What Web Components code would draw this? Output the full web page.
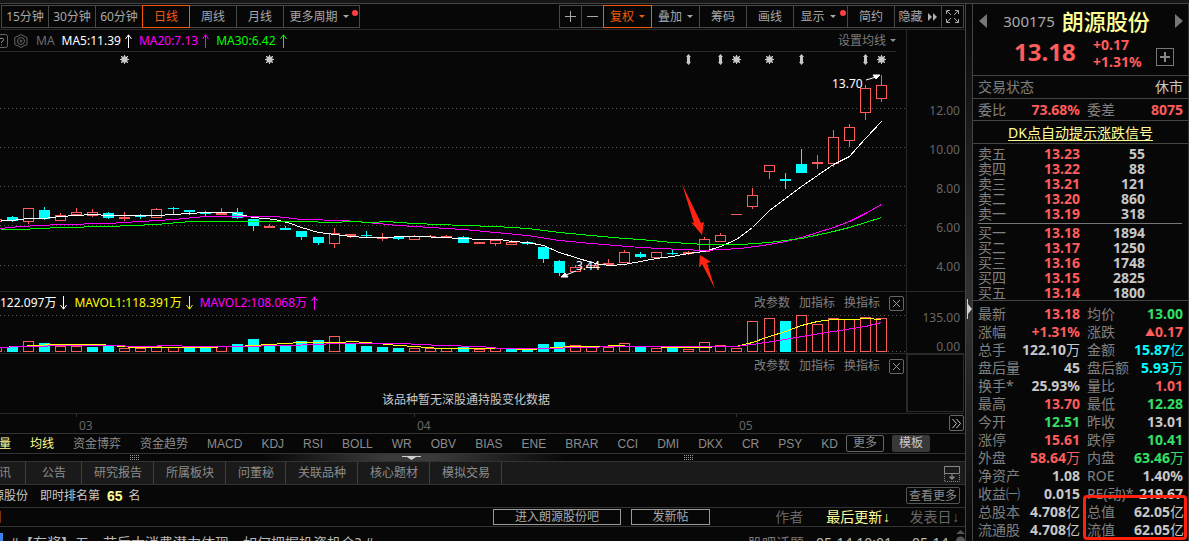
<!DOCTYPE html>
<html lang="zh-CN">
<head>
<meta charset="utf-8">
<title>朗源股份 300175</title>
<style>
:root{--line:#333;--muted:#808080;--text:#c8c8c8;--red:#ff5c5c;--green:#33e066;--cyan:#00ffff;--yellow:#ffff99;--orange:#f45a0a}
html,body{margin:0;height:100%;background:#070707}
body{font:12px/16px "Noto Sans","Noto Sans CJK SC",sans-serif;color:#a8a8a8;overflow:hidden}
</style>
</head>
<body>
<stock-app></stock-app>
<script>
const BASE = `<style>
*{box-sizing:border-box}
button{font:inherit;color:inherit;background:none;border:0;padding:0;margin:0;white-space:nowrap;cursor:pointer}
a{color:inherit;text-decoration:none}
svg{display:block;flex:none}
</style>`;
function define(name, html, setup) {
  customElements.define(name, class extends HTMLElement {
    constructor() {
      super();
      this.attachShadow({mode: 'open'});
    }
    connectedCallback() {
      this.shadowRoot.innerHTML = BASE + (typeof html === 'function' ? html(this) : html);
      if (setup) setup(this);
    }
  });
}

define('tool-button', el => `<style>
:host{display:block;position:relative;margin-left:-1px;width:48px;height:23px;flex:none}
:host([active]){color:var(--orange);z-index:1}
:host([small]){width:23px}
:host([mid]){width:49px}
:host([wide]){width:55px}
:host([period]){width:77px}
button{width:100%;height:100%;border:1px solid #484848;display:flex;align-items:center;justify-content:center;gap:5px}
:host([active]) button{border-color:var(--orange)}
.caret{border:3px solid transparent;border-top-color:currentColor;border-bottom:0}
.dot{position:absolute;right:2px;top:5px;width:6px;height:6px;border-radius:3px;background:#ff4040}
:host([period]) .caret,:host([wide]) .caret{margin-right:5px}
</style><button aria-label="${el.getAttribute('label') || el.textContent}"><slot></slot>${el.hasAttribute('menu') ? '<span class="caret"></span>' : ''}</button>${el.hasAttribute('dot') ? '<span class="dot"></span>' : ''}`);

define('chart-toolbar', `<style>
:host{display:flex;justify-content:space-between;height:27px;padding:1px 1px 0 2px;border-top:1px solid #444;border-bottom:1px solid #2a2a2a}
div{display:flex}
.right{padding-left:1px}
</style>
<div><tool-button>15分钟</tool-button><tool-button>30分钟</tool-button><tool-button>60分钟</tool-button><tool-button active>日线</tool-button><tool-button>周线</tool-button><tool-button>月线</tool-button><tool-button period menu dot>更多周期</tool-button></div>
<div class="right">
<tool-button small label="放大"><svg width="11" height="11" stroke="#a8a8a8"><path d="M0 5.5H11M5.5 0V11"/></svg></tool-button><tool-button small label="缩小"><svg width="11" height="11" stroke="#a8a8a8"><path d="M0 5.5H11"/></svg></tool-button><tool-button mid active menu>复权</tool-button><tool-button mid menu>叠加</tool-button><tool-button>筹码</tool-button><tool-button>画线</tool-button><tool-button wide menu dot>显示</tool-button><tool-button>简约</tool-button><tool-button label="隐藏">隐藏<svg style="display:inline-block" width="10" height="8" fill="#b0b0b0"><path d="M0 0L4 4L0 8ZM5 0L9 4L5 8Z"/></svg></tool-button><tool-button small label="全屏"><svg width="13" height="13" fill="none" stroke="#a8a8a8"><path d="M.5 4V.5H4M1 1L5 5M9 .5H12.5V4M12 1L8 5M.5 9V12.5H4M1 12L5 8M9 12.5H12.5V9M12 12L8 8"/></svg></tool-button>
</div>`);

define('trend-arrow', el => `<style>:host{display:inline-block;width:7px;height:14px;margin:0 7px 0 4px}:host([down]) svg{transform:rotate(180deg)}</style>
<svg width="7" height="14" fill="none" stroke="currentColor"><path d="M3.5 14V1M.5 5L3.5 .8L6.5 5"/></svg>`);

define('ma-legend', `<style>
:host{display:flex;align-items:center;height:22px;margin-right:10px;border-bottom:1px solid #2a2a2a}
span{display:flex;align-items:center}
.name{color:#6c6c6c;margin:0 7px 0 8px}
button{margin-left:auto;color:#7c7c7c;display:flex;align-items:center;gap:4px}
i{border:3px solid transparent;border-top-color:#909090;border-bottom:0}
</style>
<svg width="28" height="16" fill="none" stroke="#666"><path d="M0 1.5H5.5Q7.500 1.500 7.500 3.500V12.500Q7.500 14.500 5.500 14.500H0"/><path stroke="#999" d="M0 5.500Q3.500 4.500 3.500 6.500Q3.500 8 1.500 9V10M1.500 11.500V12.500"/><path d="M21 1.500L24 3.200L27 4.500V11.500L24 12.800L21 14.500L18 12.800L14.800 11.500V4.500L18 3.200Z"/><circle cx="21" cy="8" r="3.500"/><circle cx="21" cy="8" r="1"/></svg>
<span class="name">MA</span>
<span style="color:#fff">MA5:11.39<trend-arrow></trend-arrow></span>
<span style="color:#f0f">MA20:7.13<trend-arrow></trend-arrow></span>
<span style="color:#0f0">MA30:6.42<trend-arrow></trend-arrow></span>
<button>设置均线<i></i></button>`);

/* candle: x, high, body top, body bottom, low, falling flag — y runs down from the window top */
const CANDLES = [[-4,219,219,222,222,0],[12,216,217,221,222,1],[28,208,208,222,224,0],[44,207,210,219,220,1],[60,213,215,221,221,0],[76,208,212,215,216,0],[92,209,212,216,217,0],[108,212,213,218,219,1],[124,212,217,219,221,0],[140,214,215,217,219,1],[156,208,209,218,218,0],[173,207,208,209,215,1],[189,210,210,212,215,1],[205,211,213,214,216,1],[221,208,213,215,215,0],[237,208,212,218,219,1],[253,219,219,226,231,1],[269,224,226,228,228,0],[285,226,228,230,230,1],[301,231,231,237,240,1],[318,237,237,243,245,1],[334,228,233,244,248,0],[350,234,234,236,238,0],[366,231,235,236,237,1],[382,233,237,239,241,0],[398,237,237,239,240,1],[414,235,236,240,240,0],[430,235,236,237,237,0],[446,235,236,237,237,0],[463,236,237,243,243,1],[479,242,242,244,244,0],[495,240,240,244,246,0],[511,240,242,245,245,0],[527,241,242,244,245,1],[543,247,247,259,263,1],[559,260,261,273,276,1],[575,265,267,272,272,0],[591,265,265,268,268,0],[608,259,263,265,265,0],[624,250,252,263,263,0],[640,252,254,257,258,1],[656,252,252,258,258,0],[672,250,253,254,255,1],[688,251,252,254,255,0],[704,237,239,252,252,0],[720,233,235,242,242,0],[736,214,214,215,215,0],[752,188,195,207,209,0],[769,165,165,172,179,0],[785,173,179,181,189,1],[801,149,164,173,173,1],[817,155,162,164,169,0],[833,130,137,164,167,0],[849,124,127,141,147,0],[865,85,88,113,120,0],[881,75,85,99,102,0]];
const VOL_TOPS = '347 347 341 343 346 346 347 346 348 348 346 347 347 348 346 344 339 346 345 341 340 336 343 346 347 348 348 348 348 347 349 348 348 349 344 342 345 347 347 343 347 348 347 349 342 345 348 321 318 321 315 324 318 319 317 318'.split(' ').map(Number);
const VOL_DOWN = new Set([12,44,92,108,189,205,237,253,269,285,301,318,350,366,382,398,463,511,527,543,559,640,672,785]);
const bar = (x, top, bottom, down) => {
  const h = bottom - top;
  return down || h < 3 ? `<rect x="${x-5}" y="${top}" width="11" height="${Math.max(h,1)}" fill="${down ? '#0ff' : '#ff5c5c'}"/>`
    : `<rect x="${x-4.5}" y="${top+.5}" width="10" height="${h-1}" fill="none" stroke="#ff5c5c"/>`;
};
const poly = (color, pts) => `<polyline transform="translate(.5 .5)" fill="none" stroke="${color}" points="${pts}"/>`;
const grid = ys => ys.map(y => `<line x1="0" x2="100%" y1="${y}.5" y2="${y}.5" stroke="#555" stroke-dasharray="1 3"/>`).join('');
const star = x => `<path transform="translate(${x} 59)" fill="#c8c8c8" stroke="#c8c8c8" d="M.5 -4V5M-4 .5H5M-3 -3L4 4M4 -3L-3 4M-2 -2H3V3H-2Z"/>`;
const gem = x => `<path transform="translate(${x} 59)" fill="#c8c8c8" d="M.5 -5L3 -2H2V3H3L.5 6L-2 3H-1V-2H-2Z"/>`;

define('price-plot', () => `<style>:host{display:block;height:239px;overflow:hidden}text{font:12px "Noto Sans",sans-serif;fill:#fff}</style>
<svg width="100%" height="239"><g transform="translate(0 -52)"><g shape-rendering="crispEdges">${grid([108,147,186,225,265])}
${CANDLES.map(([x,h,t,b,l,d]) => { const c = d ? '#0ff' : '#ff5c5c';
  return `<path stroke="${c}" d="M${x+.5} ${h}V${t}M${x+.5} ${b}V${l}"/>` + bar(x,t,b,d); }).join('')}
${poly('#fff','0,220 12,220 28,218 44,218 60,216 76,215 92,214 108,215 156,215 173,214 205,212 230,212 253,217 275,219 290,223 301,227 318,232 327,233 350,236 366,237 390,237 398,236 420,236 440,237 463,238 480,239 500,239 511,241 527,242 543,245 559,252 575,257 591,262 600,264 610,265 624,264 640,261 656,258 672,256 688,253 704,251 720,246 736,239 752,227 769,210 785,198 801,186 817,175 833,164 849,156 865,138 881,121')}
${poly('#f0f','0,228 20,226 60,224 108,223 140,221 173,219 205,216 275,216 301,219 344,220 366,222 398,225 430,227 463,229 495,232 527,235 559,240 591,243 640,247 680,249 704,250 740,248 769,244 785,241 801,237 833,227 849,221 865,213 881,204')}
${poly('#0f0','0,229 20,229 60,227 108,226 156,224 190,221 301,221 334,222 350,221 372,222 385,221 414,223 463,225 495,226 527,228 559,232 591,235 624,238 640,239 672,242 704,244 740,244 769,242 801,238 833,231 849,227 865,222 881,217')}</g>
${[124,269,736,769,881].map(star).join('')}${[688,720,801,865].map(gem).join('')}
<text x="832" y="88">13.70</text><text x="576" y="270">3.44</text>
<path stroke="#fff" fill="#fff" d="M866 80L876 77M880 75L873 75L876 79Z"/>
<path stroke="#fff" fill="#fff" d="M576 271L566 275M561 277L565 273L568 277Z"/>
<path fill="#ff2314" d="M682 184L694 223L691 222L702 235L704 222L701 223ZM700 255L711 262L707 263L715 289L702 264L699 268Z"/>
</g></svg>`);

define('volume-plot', () => `<style>:host{display:block;height:39px;overflow:hidden}</style>
<svg width="100%" height="39" shape-rendering="crispEdges"><g transform="translate(0 -314)">${grid([315,351])}
${VOL_TOPS.map((t,i) => bar(CANDLES[i][0], t, 352, VOL_DOWN.has(CANDLES[i][0]))).join('')}
${poly('#ff0','0,347 36,345 52,344 100,344 133,347 198,347 237,346 253,345 301,342 342,342 350,341 366,342 398,345 414,346 440,348 500,348 530,349 543,348 570,346 600,346 615,345 633,346 688,347 736,346 752,342 769,336 785,331 801,325 817,321 833,319 855,319 865,318 881,319')}
${poly('#f0f','0,347 20,346 76,345 108,345 140,346 173,345 190,346 237,346 285,345 318,344 334,343 400,343 440,345 480,346 500,348 550,348 575,347 624,346 736,346 752,344 785,339 801,336 833,331 865,326 881,322')}
</g></svg>`);

define('panel-actions', `<style>:host{display:flex;align-items:center;gap:9px;margin-left:auto;margin-right:2px;color:#808080}
.x{border:1px solid #666;border-radius:2px;width:15px;height:15px;padding:3px}</style>
<button>改参数</button><button>加指标</button><button>换指标</button><button class="x" aria-label="关闭"><svg width="7" height="7" stroke="#999"><path d="M0 0L7 7M7 0L0 7"/></svg></button>`);

define('chart-stack', `<style>
:host{display:block}
section{display:grid;grid-template-columns:minmax(0,1fr) 58px;margin-right:1px;border-bottom:1px solid #2a2a2a}
.axis{border-left:1px solid #2a2a2a;text-align:right;padding-right:4px;color:#666}
.price .axis{padding-top:61px;line-height:39px}
.vol .axis{height:61px;line-height:29px;padding-top:11px}
.head{display:flex;align-items:center;height:22px}
.head span{display:flex;align-items:center;white-space:nowrap}
.msg{height:37px;padding:16px 0 0 26px;text-align:center;color:#c8c8c8}
.empty .axis{border:1px solid #2a2a2a;border-left-width:2px;margin-bottom:1px}
.empty .head{padding-top:2px}
.months{display:grid;grid-template-columns:76px 338px 322px minmax(0,1fr) 16px;height:19px;color:#666}
.months span{padding-left:3px;line-height:24px;background:linear-gradient(#333,#333) 0 0/1px 3px no-repeat}
.months button{border:1px solid #666;border-radius:2px;width:15px;height:16px;margin-top:1px;padding:3px 2px}
</style>
<section class="price"><div><ma-legend></ma-legend><price-plot></price-plot></div><div class="axis"><div>12.00</div><div>10.00</div><div>8.00</div><div>6.00</div><div>4.00</div></div></section>
<section class="vol"><div><div class="head"><span style="color:#fff">122.097万<trend-arrow down></trend-arrow></span><span style="color:#ff0">MAVOL1:118.391万<trend-arrow down></trend-arrow></span><span style="color:#f0f">MAVOL2:108.068万<trend-arrow></trend-arrow></span><panel-actions></panel-actions></div><volume-plot></volume-plot></div><div class="axis"><div>135.00</div><div>0.00</div></div></section>
<section class="empty"><div><div class="head"><panel-actions></panel-actions></div><div class="msg">该品种暂无深股通持股变化数据</div></div><div class="axis"></div></section>
<div class="months"><i></i><span>03</span><span>04</span><span>05</span><button aria-label="展开"><svg width="9" height="9" fill="none" stroke="#c8c8c8"><path d="M.5 0L4.500 4.500L.5 9M4.500 0L8.500 4.500L4.500 9"/></svg></button></div>`);

define('indicator-tabs', () => `<style>
:host{display:flex;align-items:center;gap:19px;height:21px;border-top:1px solid var(--line);border-bottom:1px solid var(--line);font-family:"Liberation Sans","Noto Sans CJK SC",sans-serif;color:#8c8c8c;overflow:hidden}
button{flex:none}
.on{color:var(--yellow)}
.box{border:1px solid #666;border-radius:2px;width:38px;height:17px;line-height:15px;margin-left:-11px}
.fill{background:#383838;border-color:#383838;color:#c8c8c8}
.first{margin-left:-1px}
</style><button class="on first">量</button><button class="on">均线</button>${'资金博弈 资金趋势 MACD KDJ RSI BOLL WR OBV BIAS ENE BRAR CCI DMI DKX CR PSY KD'.split(' ').map(t => `<button>${t}</button>`).join('')}<button class="box">更多</button><button class="box fill">模板</button>`);

define('pane-splitter', `<style>
:host{display:flex;height:7px;align-items:center;background:linear-gradient(90deg,transparent 27%,#3a3a3a 40%,#3a3a3a 45%,transparent 59%)}
.d{width:9px;height:6px;background:repeating-linear-gradient(90deg,#999 0 1px,transparent 1px 2px);mask:repeating-linear-gradient(#000 0 1px,transparent 1px 2px)}
.a{flex:0 0 130px}.b{flex:0 0 263px}.c{flex:0 0 263px}
</style><i class="a"></i><i class="d"></i><i class="b"></i><svg width="19" height="5" fill="#d0d0d0"><path d="M0 1H19V2H14L9.500 5L5 2H0Z"/></svg><i class="c"></i><i class="d"></i>`);

define('info-tabs', () => `<style>
:host{display:flex;height:24px;background:#1a1a1a;border-top:1px solid var(--line);border-bottom:1px solid var(--line);color:#8c8c8c}
a{padding:0 11px 0 12px;border-right:1px solid #404040;line-height:21px;white-space:nowrap}
.first{width:26px;padding:0;text-indent:-1px}
.first + a{padding:0 15px 0 16px}
button{margin:3px 5px 0 auto;height:17px}
</style><a class="first" href="#">讯</a>${'公告 研究报告 所属板块 问董秘 关联品种 核心题材 模拟交易'.split(' ').map(t => `<a href="#">${t}</a>`).join('')}
<button aria-label="停靠"><svg width="16" height="16" fill="none" stroke="#888"><path d="M.5 .5H15.500V7.500H.5Z"/><path stroke-dasharray="1 1" d="M.5 8V15.500H15.500V8"/><path d="M8 8V13M5.500 11L8 13.500L10.500 11Z" fill="#888"/></svg></button>`);

define('rank-row', `<style>
:host{display:flex;align-items:center;height:23px;padding-bottom:1px;border-bottom:1px solid var(--line);color:#c8c8c8;white-space:nowrap}
.n{margin:0 12px 0 -8px}b{font:bold 14px/16px "Liberation Sans",sans-serif;color:var(--yellow);margin:0 6px 0 7px}
button{margin:0 5px 0 auto;width:54px;height:17px;line-height:15px;border:1px solid #555;border-radius:2px;color:#8c8c8c}
</style><span class="n">源股份</span><span>即时排名第</span><b>65</b><span>名</span><button>查看更多</button>`);

define('forum-bar', `<style>
:host{display:flex;align-items:center;height:19px;border-bottom:1px solid var(--line);padding:0 5px 1px 0}
i{width:1px;height:12px;background:#7a3208}
.post{border:1px solid #999;height:16px;line-height:14px;width:79px;color:#aaa}
.go{width:128px;margin:0 10px 0 492px}
.sort{font:14px/18px "Noto Sans","Liberation Mono","Noto Sans CJK SC",sans-serif;color:#666;margin-left:19px}
.by{margin-left:auto}
.on{color:var(--yellow);margin-left:23px}
</style><i></i><button class="post go">进入朗源股份吧</button><button class="post">发新帖</button><button class="sort by">作者</button><button class="sort on">最后更新↓</button><button class="sort">发表日↓</button>`);

define('forum-list', `<style>
:host{display:flex;min-height:0;flex:1;overflow:hidden;font-size:14px;line-height:20px;color:#b8b8b8;white-space:nowrap;padding-top:6px}
i{width:3px;height:16px;background:#3c82f0;margin-right:7px;flex:none}
a{flex:1;min-width:0}
span{margin-left:12px}.topic{color:#777}
.last{margin-left:20px;width:44px}
</style><i></i><a href="#">#【有奖】五一节后大消费潜力体现，如何把握投资机会? #</a><span class="topic">股吧话题</span><span>05-14 10:01</span><span class="last">05-14</span>
<svg width="9" height="16" fill="#555" overflow="visible"><path d="M0 1L4.500 -3L9 1Z"/><path d="M0 10V8A4.500 4.500 0 0 1 9 8V10Z"/></svg>`);

define('side-splitter', `<style>
:host{display:flex;align-items:center;border-left:1px solid #444;border-right:1px solid #444;background:linear-gradient(#070707,#303030 50%,#303030 60%,#070707);border-top:1px solid #444}
svg{margin:70px 0 0 1px}
</style><svg width="5" height="20" fill="#d0d0d0"><path d="M0 0H1V5L5 10L1 15V20H0Z"/></svg>`);

const unit = s => s.replace(/[万亿]/g, '<i>$&</i>');
const BOOK = [['卖五','13.23',55],['卖四','13.22',88],['卖三','13.21',121],['卖二','13.20',860],['卖一','13.19',318],['买一','13.18',1894],['买二','13.17',1250],['买三','13.16',1748],['买四','13.15',2825],['买五','13.14',1800]];
const STATS = `最新 r13.18 均价 g13.00
涨幅 r+1.31% 涨跌 r▲0.17
总手 w122.10万 金额 c15.87亿
盘后量 w45 盘后额 c5.93万
换手* w25.93% 量比 r1.01
最高 r13.70 最低 g12.28
今开 g12.51 昨收 w13.01
涨停 r15.61 跌停 g10.41
外盘 r58.64万 内盘 g63.46万
净资产 w1.08 ROE w1.40%
收益㈠ w0.015 PE(动)* w219.67
总股本 w4.708亿 总值 w62.05亿
流通股 w4.708亿 流值 w62.05亿`.split('\n').map(r => r.split(' '));
const bookRows = rows => rows.map(r => `<tr><th scope="row">${r[0]}</th><td class="r">${r[1]}</td><td class="v">${r[2]}</td></tr>`).join('');

define('quote-panel', () => `<style>
:host{display:block;border-top:1px solid #444;border-right:1px solid #333;font-size:14px;color:var(--muted);white-space:nowrap}
.title{display:flex;align-items:center;justify-content:space-between;padding:0 5px 0 6px;height:34px}
.title div{display:flex;align-items:center;gap:7px;font-size:15px;color:#aaa;padding-right:9px}
h1{margin:0;font-size:22px;line-height:34px;font-weight:500;color:var(--yellow)}
.price{display:flex;align-items:center;height:38px;color:#ff5c5c;font-weight:700;padding-left:41px;border-bottom:1px solid #444}
.price strong{font:bold 24px/28px "Noto Sans",sans-serif;width:79px;padding-bottom:9px}
.price div{line-height:17px;padding-bottom:7px;width:63px}
.price button{width:18px;height:18px;border:1px solid #777;padding:3px}
.line{display:flex;align-items:center;height:23px;padding:0 5px;border-bottom:1px solid #444;justify-content:space-between}
.pair{height:22px;justify-content:flex-start}
.pair .r{width:74px;text-align:right}
.pair .r + span{margin-left:7px}
.pair .r:last-child{width:auto;margin-left:auto}
.w{color:var(--text)}.r{color:var(--red)}.g{color:var(--green)}.c{color:var(--cyan)}
.dk{height:23px;border-bottom:1px solid #444;display:block;text-align:center;line-height:24px;color:var(--yellow);text-decoration:underline;text-underline-offset:2px}
table{border-collapse:collapse;table-layout:fixed;width:205px;margin-left:5px;line-height:15px}
td,th{padding:0;font-weight:400;text-align:left}
td{font-weight:700;text-align:right}
.book th{width:42px}.book td.r{width:60px}.book td.v{padding-right:38px;color:var(--text)}
.sell{padding:2px 0 1px}
.sell::after{content:"";display:block;margin:2px 6px 0 5px;border-top:1px solid #777}
.buy{border-bottom:1px solid #444}
.stats{position:relative;padding-top:4px}
.stats table{line-height:18px}
.stats th{width:42px}.stats td{width:60px}.stats th+td+th{width:54px;padding-left:7px}.stats th+td+th+td{width:auto}
i{font-style:normal;font-weight:400}
small{font-size:10px;vertical-align:1px}
.mark{position:absolute;right:1px;top:194px;width:104px;height:45px;border:3px solid #ff2010;border-radius:4px}
</style>
<div class="title"><svg width="8" height="14" fill="#777"><path d="M8 0V14L0 7Z"/></svg><div><span>300175</span><h1>朗源股份</h1></div><svg width="8" height="14" fill="#777"><path d="M0 0V14L8 7Z"/></svg></div>
<div class="price"><strong>13.18</strong><div>+0.17<br>+1.31%</div><button aria-label="添加自选"><svg width="10" height="10" stroke="#888" stroke-width="2"><path d="M0 5H10M5 0V10"/></svg></button></div>
<div class="line"><span>交易状态</span><span class="w">休市</span></div>
<div class="line pair"><span>委比</span><b class="r">73.68%</b><span>委差</span><b class="r">8075</b></div>
<a class="dk" href="#">DK点自动提示涨跌信号</a>
<div class="sell"><table class="book">${bookRows(BOOK.slice(0,5))}</table></div>
<div class="buy"><table class="book">${bookRows(BOOK.slice(5))}</table></div>
<div class="stats"><table>${STATS.map(r => `<tr>${r.map((c,i) => i % 2 ? `<td class="${c[0]}">${unit(c.slice(1)).replace('▲','<small>▲</small>')}</td>` : `<th scope="row">${c}</th>`).join('')}</tr>`).join('')}</table><div class="mark"></div></div>`);

define('stock-app', `<style>
:host{display:grid;grid-template-columns:minmax(0,1fr) 8px 216px;height:100vh;padding-top:3px;background:linear-gradient(#161616 0 3px,#070707 3px);overflow:hidden}
main{display:flex;flex-direction:column;min-height:0;overflow:hidden}
main>*{flex:none}main>forum-list{flex:1}
</style>
<main><chart-toolbar></chart-toolbar><chart-stack></chart-stack><indicator-tabs></indicator-tabs><pane-splitter></pane-splitter><info-tabs></info-tabs><rank-row></rank-row><forum-bar></forum-bar><forum-list></forum-list></main>
<side-splitter></side-splitter><quote-panel></quote-panel>`);
</script>
</body>
</html>
